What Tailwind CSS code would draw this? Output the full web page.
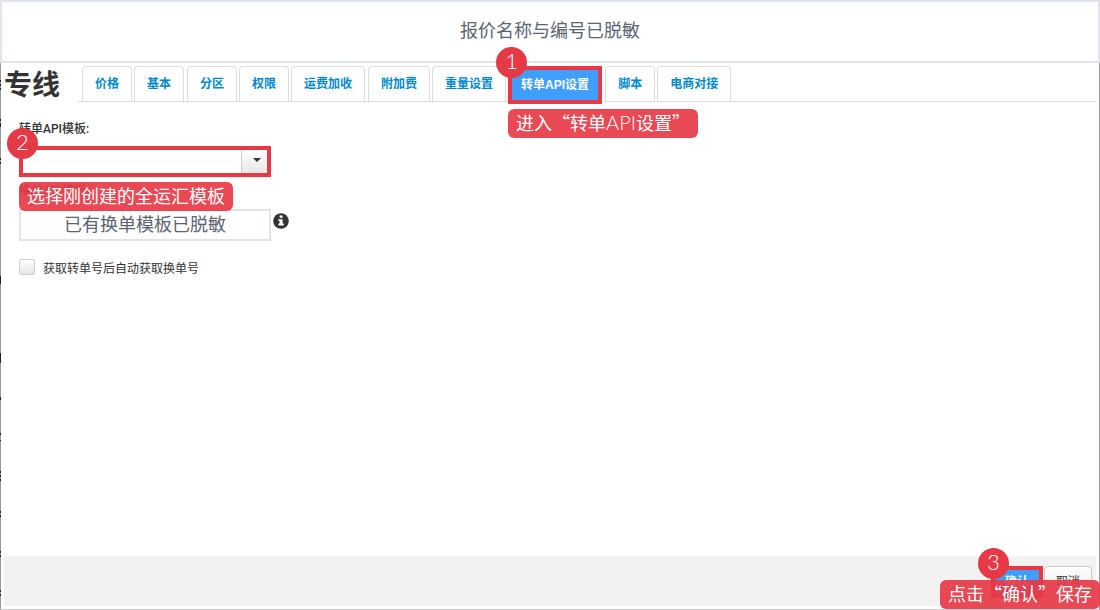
<!DOCTYPE html>
<html lang="zh-CN">
<head>
  <meta charset="UTF-8">
  <meta name="viewport" content="width=device-width, initial-scale=1.0">
  <title>转单API设置</title>
  <script src="https://cdn.jsdelivr.net/npm/@tailwindcss/browser@4"></script>
</head>
<body class="bg-white font-['Liberation_Sans','Noto_Sans_CJK_SC',sans-serif] text-xs text-[#333]">
  <div class="flex min-h-screen flex-col">
    <header class="flex h-[63px] items-center justify-center border-2 border-[#e1e4ea] pb-[6px] font-['Noto_Sans_CJK_SC',sans-serif] text-lg text-[#5b6472]">报价名称与编号已脱敏</header>

    <main class="relative flex grow flex-col border-x border-b border-l-[#999] border-r-[#999] border-b-[#ccc]">
      <!-- Rows of the page behind the dialog -->
      <svg class="absolute top-0 -left-px h-full w-px" fill="#222" aria-hidden="true">
        <path d="M0 17h1v2H0zM0 21h1v2H0zM0 25h1v2H0zM0 56h1v2H0zM0 60h1v4H0zM0 95h1v2H0zM0 99h1v2H0zM0 213h1v8H0zM0 290h1v10H0zM0 334h1v3H0zM0 370h1v2H0zM0 377h1v1H0zM0 408h1v2H0zM0 412h1v2H0zM0 416h1v2H0zM0 448h1v2H0zM0 452h1v2H0zM0 488h1v2H0zM0 492h1v2H0zM0 527h1v2H0zM0 531h1v2H0z"/>
      </svg>

      <div class="flex pr-1 pl-[3px]">
        <h1 class="w-[74px] pt-1 font-['Kaiti_SC','KaiTi','Noto_Sans_CJK_SC',serif] text-[28px] leading-8 font-bold">专线</h1>
        <nav class="mt-[3px] flex h-9 grow gap-[3px] border-b border-[#ddd] pl-1 font-bold text-[#0088cc]">
          <button class="rounded-t border border-b-0 border-[#ddd] px-3">价格</button>
          <button class="-ml-px rounded-t border border-b-0 border-[#ddd] px-3">基本</button>
          <button class="rounded-t border border-b-0 border-[#ddd] px-3">分区</button>
          <button class="-ml-px rounded-t border border-b-0 border-[#ddd] px-3">权限</button>
          <button class="-ml-px rounded-t border border-b-0 border-[#ddd] px-3">运费加收</button>
          <button class="rounded-t border border-b-0 border-[#ddd] px-3">附加费</button>
          <button class="-ml-px rounded-t border border-b-0 border-[#ddd] px-3">重量设置</button>
          <div class="relative -ml-px flex">
            <button class="-mb-[3px] border-4 border-[#e63946] bg-[#409eff] px-[9px] text-white">转单API设置</button>
            <span class="absolute -top-[19px] -left-3 flex size-[31px] items-center justify-center rounded-full bg-[#e63946] pb-1 font-['Lato',sans-serif] text-[22px] leading-7 font-light text-white">1</span>
            <span class="absolute top-[43px] left-0 h-[29px] rounded-md bg-[#e63946]/92 px-2 font-['Noto_Sans_CJK_SC',sans-serif] text-lg leading-[26px] font-normal whitespace-nowrap text-white">进入“转单<span class="font-['Lato',sans-serif] text-xl leading-[26px] font-light">API</span>设置”</span>
          </div>
          <button class="rounded-t border border-b-0 border-[#ddd] px-3">脚本</button>
          <button class="-ml-px rounded-t border border-b-0 border-[#ddd] px-3">电商对接</button>
        </nav>
      </div>

      <form class="flex grow flex-col items-start pt-[18px] pl-[18px]">
        <label for="transfer-template" class="font-['Roboto','Noto_Sans_CJK_SC',sans-serif] leading-[18px] font-medium">转单API模板:</label>
        <div class="relative mt-2 h-[31px] w-[252px] border-4 border-[#e63946]">
          <select id="transfer-template" class="block h-full w-full appearance-none bg-white">
            <option></option>
          </select>
          <div class="pointer-events-none absolute inset-y-0 right-0 flex w-[26px] items-center justify-center border-l border-[#ccc] bg-linear-to-b from-white to-[#e6e6e6] pb-1 pl-1">
            <svg class="h-1 w-2" viewBox="0 0 8 4" fill="#333"><path d="M0 0h8L4 4z"/></svg>
          </div>
          <span class="absolute -top-[22px] -left-4 flex size-[31px] items-center justify-center rounded-full bg-[#e63946] pb-1 font-['Lato',sans-serif] text-[22px] leading-7 font-light text-white">2</span>
          <span class="absolute top-8 -left-1 z-10 h-[29px] rounded-md bg-[#e63946]/92 px-2 font-['Noto_Sans_CJK_SC',sans-serif] text-lg leading-[26px] whitespace-nowrap text-white">选择刚创建的全运汇模板</span>
        </div>
        <label for="swap-template" class="mt-[5px] font-['Roboto','Noto_Sans_CJK_SC',sans-serif] leading-[18px] font-medium">换单API模板:</label>
        <div class="mt-[9px] flex items-start gap-[2px]">
          <input id="swap-template" type="text" value="已有换单模板已脱敏" class="h-8 w-[252px] border-2 border-[#e1e4ea] bg-white pb-1 text-center font-['Noto_Sans_CJK_SC',sans-serif] text-lg text-[#5b6472]">
          <svg class="mt-1 size-4" viewBox="0 0 16 16"><circle cx="8" cy="8" r="7.8" fill="#333"/><path d="M6.6 2.5h3v2.3h-3zM5.4 6.2h4.2v4.4h1.2v1.8H5.4v-1.8h1.2V8H5.4z" fill="#fff"/></svg>
        </div>
        <label class="mt-[18px] flex items-start gap-2 leading-5">
          <input type="checkbox" class="size-4 appearance-none rounded-xs border border-[#ccc] bg-linear-to-b from-white to-[#e6e6e6]">
          获取转单号后自动获取换单号
        </label>
      </form>

      <footer class="mx-[3px] mb-[3px] flex h-[50px] justify-end bg-[#f2f2f2] pt-[10px] pr-1">
        <div class="relative flex gap-px">
          <button class="h-8 w-[52px] border-4 border-[#e63946] bg-[#409eff] font-bold text-white">确认</button>
          <button class="h-8 w-12 rounded border border-[#ccc] bg-linear-to-b from-white to-[#e6e6e6]">取消</button>
          <span class="absolute top-[14px] -right-2 h-[29px] rounded-md bg-[#e63946]/92 px-2 font-['Noto_Sans_CJK_SC',sans-serif] text-lg leading-[26px] whitespace-nowrap text-white">点击“确认”保存</span>
          <span class="absolute -top-[18px] -left-[13px] flex size-[31px] items-center justify-center rounded-full bg-[#e63946] pb-1 font-['Lato',sans-serif] text-[22px] leading-7 font-light text-white">3</span>
        </div>
      </footer>
    </main>
  </div>
</body>
</html>
